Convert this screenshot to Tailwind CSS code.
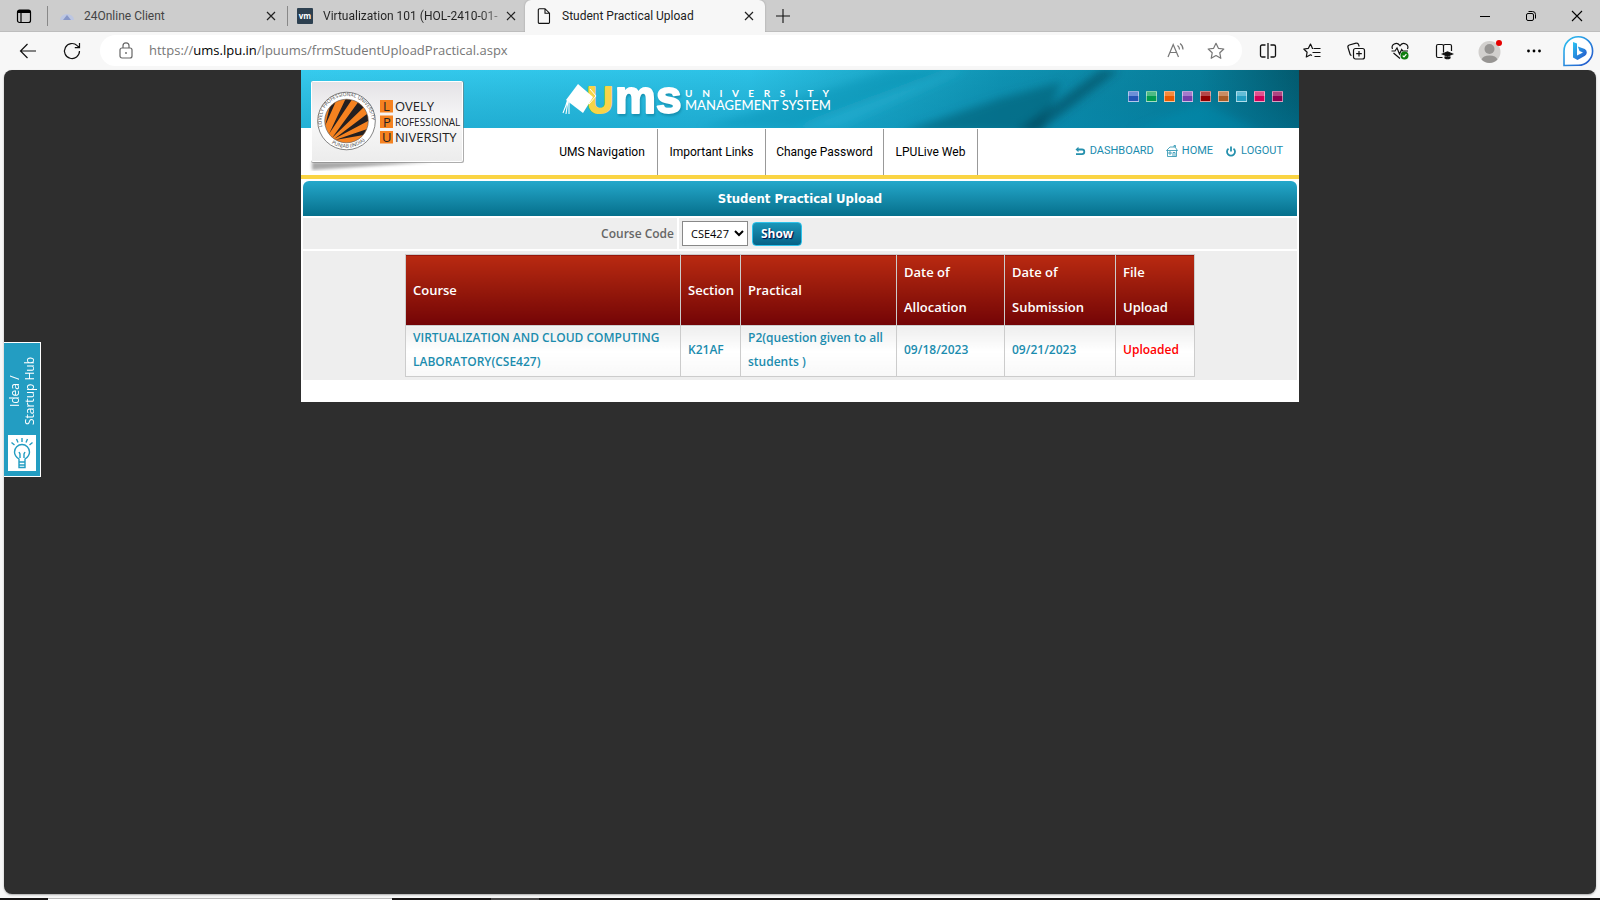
<!DOCTYPE html>
<html lang="en">
<head>
<meta charset="utf-8">
<title>Student Practical Upload</title>
<script src="https://cdn.jsdelivr.net/npm/@tailwindcss/browser@4"></script>
</head>
<body class="flex h-screen flex-col overflow-hidden bg-[#f7f7f7] font-['Open_Sans',sans-serif] text-xs text-black">

<!-- Tab strip -->
<header class="flex h-8 shrink-0 items-stretch bg-[#cdcdcd] font-['Roboto',sans-serif] shadow-[inset_0_-1px_0_#bdbdbd]">
  <button aria-label="Tab actions" class="flex w-[47px] items-center justify-center">
    <svg class="size-4" viewBox="0 0 16 16" fill="none" stroke="#000"><rect x="1.5" y="2" width="13" height="12.5" rx="2" stroke-width="1.2"/><path d="M2 3.5h12" stroke-width="3"/><path d="M5 5v9.500" stroke-width="1.200"/></svg>
  </button>
  <div class="flex w-60 items-center pr-2.5">
    <span class="h-5 w-px bg-[#888]"></span>
    <svg class="ml-3 size-4" viewBox="0 0 16 16"><path d="M0 12a7 6 0 0 1 14 0z" fill="#bcc6e2"/><path d="M3 12l4-5 4 5z" fill="#8797c7"/></svg>
    <span class="ml-2 grow whitespace-nowrap text-[#444]">24Online Client</span>
    <button aria-label="Close tab"><svg class="size-3" viewBox="0 0 12 12" stroke="#222" stroke-width="1.2"><path d="M2 2l8 8M10 2l-8 8"/></svg></button>
  </div>
  <div class="flex w-[238px] items-center pr-2">
    <span class="h-5 w-px bg-[#888]"></span>
    <svg class="ml-[9px] size-4 shrink-0" viewBox="0 0 16 16"><rect width="16" height="16" rx="1" fill="#2d4050"/><text x="8" y="10.500" text-anchor="middle" font-family="Open Sans" font-weight="700" font-size="8" fill="#fff">vm</text></svg>
    <span class="ml-2.5 grow bg-linear-to-r from-[#222] from-85% to-[#aaa] bg-clip-text whitespace-nowrap text-transparent">Virtualization 101 (HOL-2410-01-</span>
    <button aria-label="Close tab"><svg class="size-3" viewBox="0 0 12 12" stroke="#222" stroke-width="1.2"><path d="M2 2l8 8M10 2l-8 8"/></svg></button>
  </div>
  <div class="flex w-60 items-center rounded-t-md bg-[#f7f7f7] pr-2.5 pl-[11px] shadow-[0_0_2px_#999] [clip-path:inset(0_-2px_0_-2px)]">
    <svg class="size-4" viewBox="0 0 16 16" fill="none" stroke="#111" stroke-width="1.1"><path d="M3.500.700h5.500l4.500 4.500v9a1.200 1.200 0 0 1-1.200 1.200H3.500a1.200 1.200 0 0 1-1.200-1.200V1.900A1.200 1.200 0 0 1 3.500.700zM9 .900v4.300h4.300"/></svg>
    <span class="ml-2.5 grow whitespace-nowrap text-[#222]">Student Practical Upload</span>
    <button aria-label="Close tab"><svg class="size-3" viewBox="0 0 12 12" stroke="#222" stroke-width="1.2"><path d="M2 2l8 8M10 2l-8 8"/></svg></button>
  </div>
  <button aria-label="New tab" class="flex w-9 items-center justify-center"><svg class="size-4" viewBox="0 0 16 16" stroke="#111" stroke-width="1.1"><path d="M8 1v14M1 8h14"/></svg></button>
  <div class="ml-auto flex">
    <button aria-label="Minimize" class="flex w-[46px] items-center justify-center"><svg class="size-3" viewBox="0 0 12 12" stroke="#000"><path d="M1 6.500h10"/></svg></button>
    <button aria-label="Restore" class="flex w-[46px] items-center justify-center"><svg class="size-3" viewBox="0 0 12 12" fill="none" stroke="#000"><rect x="1.500" y="3.500" width="7" height="7" rx="1.500"/><path d="M3.500 1.500h4a3 3 0 0 1 3 3v4"/></svg></button>
    <button aria-label="Close window" class="flex w-[46px] items-center justify-center"><svg class="size-3" viewBox="0 0 12 12" stroke="#000" stroke-width="1.100"><path d="M1 1l10 10M11 1L1 11"/></svg></button>
  </div>
</header>

<!-- Toolbar -->
<div class="flex h-[38px] shrink-0 items-center pb-px">
  <button aria-label="Back" class="ml-4 flex w-6 justify-center"><svg class="size-5" viewBox="0 0 20 20" fill="none" stroke="#111" stroke-width="1.200"><path d="M18 10H2.500M9.500 3L2.500 10l7 7"/></svg></button>
  <button aria-label="Refresh" class="ml-5 flex w-6 justify-center"><svg class="size-5" viewBox="0 0 20 20" fill="none" stroke="#111" stroke-width="1.200"><path d="M17.500 10a7.500 7.500 0 1 1-2.300-5.400L17.300 6.500M17.500 2v4.700h-4.700"/></svg></button>
  <div class="ml-4 flex h-[31px] grow items-center rounded-full bg-white pr-4 pl-4">
    <svg class="size-5 shrink-0" viewBox="0 0 20 20" fill="none" stroke="#666" stroke-width="1.200"><rect x="4" y="7" width="12" height="10" rx="2"/><path d="M7 7V4.800a3 3 0 0 1 6 0V7"/><circle cx="10" cy="12" r=".9" fill="#666" stroke="none"/></svg>
    <a href="#" class="ml-[13px] grow text-[13px] text-[#777]">https://<span class="text-black">ums.lpu.in</span>/lpuums/frmStudentUploadPractical.aspx</a>
    <button aria-label="Read aloud"><svg class="size-5" viewBox="0 0 20 20" fill="none" stroke="#777" stroke-width="1.200"><path d="M2 16L7.200 3.500 12.500 16M4 11.500h6.500M11.500 4.500q2 1.500 2 4M14 2.500q3 2 3 6"/></svg></button>
    <button aria-label="Add to favorites" class="ml-5"><svg class="size-5" viewBox="0 0 20 20" fill="none" stroke="#777" stroke-width="1.200" stroke-linejoin="round"><path d="M10 2.300l2.400 5 5.400.7-4 3.800 1 5.500-4.800-2.700-4.800 2.700 1-5.500-4-3.800 5.400-.7z"/></svg></button>
  </div>
  <div class="ml-4 flex items-center gap-6">
    <button aria-label="Split screen"><svg class="size-5" viewBox="0 0 20 20" fill="none" stroke="#111" stroke-width="1.300"><path d="M10 2v16M7.500 4H4a1.500 1.500 0 0 0-1.500 1.500v9A1.500 1.500 0 0 0 4 16h3.500M12.500 4H16a1.500 1.500 0 0 1 1.500 1.500v9A1.500 1.500 0 0 1 16 16h-3.500"/></svg></button>
    <button aria-label="Favorites"><svg class="size-5" viewBox="0 0 20 20" fill="none" stroke="#111" stroke-width="1.200" stroke-linejoin="round"><path d="M11.500 7.500h-1L8.500 3 6.400 7.300l-4.600.7 3.300 3.200-.8 4.800 4.200-2.200 1.500.7M12 7.500h6.500M10.500 11.500h8M12.500 15.500h6"/></svg></button>
    <button aria-label="Collections"><svg class="size-5" viewBox="0 0 20 20" fill="none" stroke="#111" stroke-width="1.200"><rect x="7.500" y="7.500" width="11" height="10.500" rx="2"/><path d="M13 10v5.500M10.200 12.700h5.600M5.500 14.500A2 2 0 0 1 4 13L2 6.500A2 2 0 0 1 3.300 4L10 2.200A2 2 0 0 1 12.500 3.500l.7 2"/></svg></button>
    <button aria-label="Browser essentials"><svg class="size-5" viewBox="0 0 20 20" fill="none" stroke="#111" stroke-width="1.200"><path d="M2.500 8A4 4 0 0 1 9.500 4.200L10 4.800l.5-.6A4 4 0 0 1 17.500 8M3.500 12L10 17.500M1.500 10H5l2-3 2.500 6 2.200-4.500 1 1.500H18"/><circle cx="14.500" cy="14.500" r="4" fill="#107c10" stroke="none"/><path d="M12.700 14.600l1.300 1.300 2.400-2.700" stroke="#fff"/></svg></button>
    <button aria-label="Immersive reader"><svg class="size-5" viewBox="0 0 20 20" fill="none" stroke="#111" stroke-width="1.200"><path d="M8.500 16.500H4A1.500 1.500 0 0 1 2.500 15V5A1.500 1.500 0 0 1 4 3.500h4A1.500 1.500 0 0 1 9.500 5v6.500M9.500 5A1.500 1.500 0 0 1 11 3.500h5A1.500 1.500 0 0 1 17.500 5v5"/><path d="M8.500 13l5-2 5 2-5 2.200z" fill="#111"/><path d="M11 15.500v1.500q2.500 1.500 5 0v-1.500" fill="#111"/></svg></button>
    <button aria-label="Profile"><svg class="size-6" viewBox="0 0 24 24"><circle cx="11.500" cy="13" r="11" fill="#d2d0ce"/><circle cx="11.500" cy="10" r="5" fill="#979593"/><path d="M3.500 20.500Q5 16.500 11.500 16.500t8 4a11 11 0 0 1-16 0z" fill="#979593"/><circle cx="21" cy="4" r="3" fill="#e60000"/></svg></button>
    <button aria-label="Settings"><svg class="size-4" viewBox="0 0 16 16"><circle cx="2.500" cy="8" r="1.400"/><circle cx="8" cy="8" r="1.400"/><circle cx="13.500" cy="8" r="1.400"/></svg></button>
  </div>
  <button aria-label="Bing" class="mr-1.5 ml-5"><svg class="size-8" viewBox="0 0 32 32"><defs><linearGradient id="bing" x1="0" y1="0" x2="1" y2="1"><stop stop-color="#2bc4f3"/><stop offset="1" stop-color="#2550c8"/></linearGradient></defs><path d="M2 30.500V16A14.300 14.300 0 1 1 16.300 30.300z" fill="#fff" stroke="url(#bing)" stroke-width="1.600"/><path d="M11 7l4 1.500v12l6-3-3.500-1.500-1.700-4.500 7 2.500q2 1 2 3.500 0 2-1.800 3.300L15.500 25 11 22.500z" fill="url(#bing)"/></svg></button>
</div>

<!-- Viewport -->
<main class="relative mx-1 mb-1 min-h-0 grow overflow-hidden rounded-lg bg-[#2e2e2e] shadow-[0_1px_2px_#aaa]">

  <a href="#" class="absolute top-[272px] left-0 flex h-[135px] w-[37px] flex-col items-center justify-end border border-l-0 border-white bg-[#239dc2] pr-px pb-[5px] text-white">
    <span class="mb-2.5 rotate-180 text-left text-xs leading-[15px] whitespace-nowrap [writing-mode:vertical-rl]"><span class="block text-center">Idea /</span><span class="block">Startup Hub</span></span>
    <svg class="h-9 w-7 bg-white" viewBox="0 0 28 36" fill="none" stroke="#239dc2" stroke-width="1.400"><path d="M11 27v-3q-4.500-3-4.500-7a7.500 7.500 0 0 1 15 0q0 4-4.500 7v3zM11 27h6v5.500h-6zM11 30h6M12 23v-4l-1-2M16 23v-4l1-2M14 3v4M8.500 4l1.500 3.500M19.500 4L18 7.500M3.500 7.500L6.500 10M24.500 7.500L21.500 10"/></svg>
  </a>

  <div class="relative mx-auto max-w-[998px] bg-white pb-[22px]">
    <!-- Banner -->
    <div class="relative flex h-[58px] items-start justify-between overflow-hidden">
      <svg class="absolute inset-0 size-full" viewBox="0 0 998 58" preserveAspectRatio="none">
        <defs><linearGradient id="bg" x1="0" y1="0" x2="1" y2="0"><stop stop-color="#36cbee"/><stop offset=".45" stop-color="#2cc2e6"/><stop offset=".6" stop-color="#1aa6c6"/><stop offset=".7" stop-color="#0f93b3"/><stop offset=".9" stop-color="#077d99"/><stop offset="1" stop-color="#035a6e"/></linearGradient>
        <linearGradient id="shade" x1="0" y1="0" x2="0" y2="1"><stop stop-color="#006a88" stop-opacity="0"/><stop offset="1" stop-color="#007fa8" stop-opacity=".35"/></linearGradient>
        <filter id="soft"><feGaussianBlur stdDeviation="4"/></filter></defs>
        <rect width="998" height="58" fill="url(#bg)"/><rect width="998" height="58" fill="url(#shade)"/>
        <g filter="url(#soft)"><path d="M400 58L590 0h60L500 58z" fill="#0a8cab" opacity=".35"/><path d="M490 58L650 0h15L540 58z" fill="#35c9ea" opacity=".2"/><path d="M600 62L700 28l60-16-20 50z" fill="#005a70" opacity=".55"/><path d="M714 62L800 0h18L738 62z" fill="#003e50" opacity=".5"/><path d="M830 62L900 32l60 30z" fill="#008fb2" opacity=".4"/></g>
      </svg>
      <div class="relative ml-[260px] flex items-center pt-2.5 text-white">
        <svg class="h-[38px] w-[122px] overflow-visible" viewBox="0 0 122 38" role="img" aria-label="UMS">
          <g font-family="Liberation Sans" font-weight="700" stroke-linejoin="round">
            <text x="26" y="33" font-size="36" fill="#f8d448" stroke="#f8d448" stroke-width="2">U</text>
            <text x="54" y="33" font-size="46" fill="#fff" stroke="#fff" stroke-width="2" class="drop-shadow-[1px_2px_1px_#0a6f8c80]">ms</text>
          </g>
          <path d="M17 4l15 13-10 16L5 20z" fill="#fff"/><path d="M7 19Q5 26 2 33M7 21q-1 6-2 13M8 22v12" fill="none" stroke="#fff" stroke-width="1.100"/><path d="M29 9l6 7-7 8" fill="none" stroke="#fff"/>
        </svg>
        <div class="ml-0.5 font-['Lato',sans-serif] leading-3">
          <div class="text-[10px] leading-3 font-bold whitespace-pre">U    N    I    V    E    R    S    I    T    Y</div>
          <div class="text-[13px] leading-3 font-medium">MANAGEMENT SYSTEM</div>
        </div>
      </div>
      <div class="relative mt-[21px] mr-4 flex gap-[7px]">
        <button aria-label="Blue theme" class="size-[11px] border border-white/50 bg-linear-to-b from-[#6c8fd8] from-50% to-[#2453b5] to-50%"></button>
        <button aria-label="Green theme" class="size-[11px] border border-white/50 bg-linear-to-b from-[#4dbb85] from-50% to-[#009b4e] to-50%"></button>
        <button aria-label="Orange theme" class="size-[11px] border border-white/50 bg-linear-to-b from-[#f78b3c] from-50% to-[#e85a00] to-50%"></button>
        <button aria-label="Violet theme" class="size-[11px] border border-white/50 bg-linear-to-b from-[#a47acb] from-50% to-[#7440ab] to-50%"></button>
        <button aria-label="Red theme" class="size-[11px] border border-white/50 bg-linear-to-b from-[#b54848] from-50% to-[#920000] to-50%"></button>
        <button aria-label="Brown theme" class="size-[11px] border border-white/50 bg-linear-to-b from-[#c98d63] from-50% to-[#a95c26] to-50%"></button>
        <button aria-label="Sky theme" class="size-[11px] border border-white/50 bg-linear-to-b from-[#63bdd6] from-50% to-[#249fc3] to-50%"></button>
        <button aria-label="Pink theme" class="size-[11px] border border-white/50 bg-linear-to-b from-[#e2528e] from-50% to-[#d10057] to-50%"></button>
        <button aria-label="Plum theme" class="size-[11px] border border-white/50 bg-linear-to-b from-[#ae4581] from-50% to-[#8b0050] to-50%"></button>
      </div>
    </div>

    <!-- Logo card -->
    <svg class="absolute top-2.5 left-2 h-[92px] w-[158px]" viewBox="0 0 158 92" role="img" aria-label="Lovely Professional University">
      <defs><linearGradient id="card" x1="0" y1="0" x2="0" y2="1"><stop stop-color="#e4e2e6"/><stop offset=".5" stop-color="#f8f8f8"/><stop offset="1" stop-color="#ececec"/></linearGradient>
      <filter id="cs"><feGaussianBlur stdDeviation="1.500"/></filter>
      <clipPath id="ball"><circle cx="37.500" cy="41" r="21.500"/></clipPath>
      <path id="ringTop" d="M13.200 47A25 25 0 1 1 61.800 47"/><path id="ringBot" d="M16 57A27 27 0 0 0 59 57"/></defs>
      <path d="M3 82h120L3 90z" fill="#555" opacity=".5" filter="url(#cs)"/>
      <rect x="2" y="1" width="153" height="82" rx="2" fill="#777" opacity=".6"/>
      <rect x="2.500" y="1.500" width="151" height="80" rx="1" fill="url(#card)" stroke="#fff"/>
      <circle cx="37.500" cy="41" r="28.800" fill="#fff" stroke="#666" stroke-width=".8"/>
      <circle cx="37.500" cy="41" r="21.800" fill="#f58220" stroke="#555" stroke-width=".6"/>
      <g clip-path="url(#ball)" fill="#231f20"><path d="M16 46L22 22l6-3zM20 54L37 18h7zM23 58L50 21l6 5zM25 59L58 34l3 6zM26 60L61 48v6z"/></g>
      <g font-family="Open Sans" font-size="5" fill="#444"><text><textPath href="#ringTop">LOVELY   PROFESSIONAL   UNIVERSITY</textPath></text><text><textPath href="#ringBot" startOffset="9">PUNJAB (INDIA)</textPath></text></g>
      <path d="M71 20h13v12.500H71zM71 35.500h13V48H71zM71 51h13v12.500H71z" fill="#f58220"/>
      <g font-family="Open Sans" font-size="13" font-weight="500" fill="#222"><text x="74" y="31">L</text><text x="74" y="46.500">P</text><text x="73" y="62">U</text><text x="86" y="31">OVELY</text><text x="86" y="46" font-size="10">ROFESSIONAL</text><text x="86" y="62">NIVERSITY</text></g>
    </svg>

    <!-- Navigation -->
    <div class="flex h-[51px] items-stretch justify-between border-b-4 border-[#fad443] pt-px font-['Roboto',sans-serif]">
      <nav class="ml-[246px] flex">
        <a href="#" class="flex w-[111px] items-center justify-center border-r border-[#999]">UMS Navigation</a>
        <a href="#" class="flex w-[108px] items-center justify-center border-r border-[#999]">Important Links</a>
        <a href="#" class="flex w-[118px] items-center justify-center border-r border-[#999]">Change Password</a>
        <a href="#" class="flex w-[94px] items-center justify-center border-r border-[#999]">LPULive Web</a>
      </nav>
      <div class="mr-4 flex items-center gap-3 pb-0.5 text-[11px] text-[#1b8cae]">
        <a href="#" class="flex items-center gap-1"><svg class="size-3" viewBox="0 0 12 12" fill="none" stroke="#2590ad" stroke-width="1.800"><path d="M3 4.500h5a2.300 2.300 0 0 1 0 4.600H2"/><path d="M4.500 1.800L1.500 4.500l3 2.700z" fill="#2590ad" stroke="none"/></svg>DASHBOARD</a>
        <a href="#" class="flex items-center gap-1"><svg class="size-3" viewBox="0 0 12 12" fill="none" stroke="#2590ad" stroke-width=".8"><path d="M.5 5.500L4 2h5l2.500 3.500zM1.500 5.500v6h9v-6M3 7h2v2H3zM7 11.500V7.500h2v4M8 2V.500h1.500V2"/></svg>HOME</a>
        <a href="#" class="flex items-center gap-1"><svg class="size-3" viewBox="0 0 12 12" fill="none" stroke="#2590ad" stroke-width="1.800"><path d="M3.500 3.600a4 4 0 1 0 5 0M6 1.500v5"/></svg>LOGOUT</a>
      </div>
    </div>

    <!-- Page content -->
    <div class="flex flex-col gap-0.5 px-0.5 pt-0.5">
      <h1 class="flex h-[35px] items-center justify-center rounded-t-md bg-linear-to-b from-[#24a8cb] to-[#05708c] font-['DejaVu_Sans_Condensed','DejaVu_Sans',sans-serif] text-[13px] font-bold text-white">Student Practical Upload</h1>
      <form class="grid grid-cols-[374fr_618fr] gap-0.5">
        <label for="course" class="flex h-[31px] items-center justify-end bg-[#eee] pr-[3px] font-semibold text-[#666]">Course Code</label>
        <div class="flex items-center gap-1 bg-[#eee] pl-[3px]">
          <select id="course" class="h-[25px] w-[66px] border border-[#888] bg-white pl-1 text-[11px] text-black"><option>CSE427</option></select>
          <button type="button" class="h-6 w-[50px] rounded-[4px] border border-[#2cc2ea] bg-linear-to-b from-[#1b96b9] to-[#066286] font-bold text-white text-shadow-[1px_1px_1px_#004]">Show</button>
        </div>
      </form>
      <div class="bg-[#eee] pt-[3px] pb-[3px]">
        <table class="mx-auto w-[790px] table-fixed border-collapse text-left">
          <colgroup><col class="w-[275px]"><col class="w-[60px]"><col class="w-[156px]"><col class="w-[108px]"><col class="w-[111px]"><col class="w-[79px]"></colgroup>
          <thead>
            <tr class="h-[71px] text-[13px] leading-[35px] text-white [&>th]:border [&>th]:border-[#ccc] [&>th]:bg-linear-to-b [&>th]:from-[#b92a11] [&>th]:to-[#730406] [&>th]:pl-[7px] [&>th]:font-semibold">
              <th scope="col">Course</th><th scope="col">Section</th><th scope="col">Practical</th><th scope="col">Date of<br>Allocation</th><th scope="col">Date of<br>Submission</th><th scope="col">File<br>Upload</th>
            </tr>
          </thead>
          <tbody>
            <tr class="h-[51px] leading-6 font-semibold text-[#1b8cae] [&>td]:border [&>td]:border-[#ccc] [&>td]:bg-linear-to-b [&>td]:from-[#eee] [&>td]:via-white [&>td]:to-[#f8f8f8] [&>td]:px-[7px] [&>td]:pb-0.5">
              <td>VIRTUALIZATION AND CLOUD COMPUTING LABORATORY(CSE427)</td><td>K21AF</td><td>P2(question given to all students )</td><td>09/18/2023</td><td>09/21/2023</td><td class="text-[#f00]">Uploaded</td>
            </tr>
          </tbody>
        </table>
      </div>
    </div>
  </div>
</main>

<!-- Taskbar edge -->
<footer class="flex h-0.5 shrink-0 bg-[#151313]">
  <span class="ml-12 h-full w-[344px] border-t border-[#bbb] bg-white"></span>
  <span class="ml-[99px] h-full w-12 bg-[#484646]"></span>
</footer>
</body>
</html>
